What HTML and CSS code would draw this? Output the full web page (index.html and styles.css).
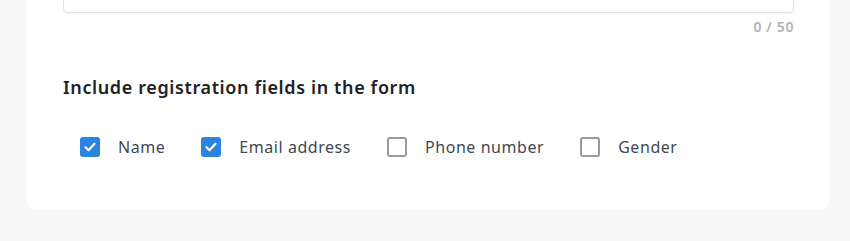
FILE: index.html
```html
<!DOCTYPE html>
<html lang="en">
<head>
<meta charset="utf-8">
<link rel="stylesheet" href="styles.css">
</head>
<body>
<div class="card">
  <div class="textarea"></div>
  <div class="counter">0 / 50</div>
  <h2 class="title">Include registration fields in the form</h2>
  <div class="options">
    <label class="option"><span class="box checked"><svg viewBox="0 0 20 20" width="20" height="20"><path d="M5.5 10.2l3 3 6-6.4" fill="none" stroke="#fff" stroke-width="2.2" stroke-linecap="round" stroke-linejoin="round"/></svg></span><span class="text">Name</span></label>
    <label class="option"><span class="box checked"><svg viewBox="0 0 20 20" width="20" height="20"><path d="M5.5 10.2l3 3 6-6.4" fill="none" stroke="#fff" stroke-width="2.2" stroke-linecap="round" stroke-linejoin="round"/></svg></span><span class="text">Email address</span></label>
    <label class="option"><span class="box"></span><span class="text">Phone number</span></label>
    <label class="option"><span class="box"></span><span class="text">Gender</span></label>
  </div>
</div>
</body>
</html>
```

FILE: styles.css
```css
html, body {
  margin: 0;
  padding: 0;
}
body {
  background: #f8f8f8;
  font-family: "Noto Sans", "Liberation Sans", sans-serif;
  width: 850px;
  height: 241px;
  overflow: hidden;
}
.card {
  margin: -70px 21px 0 27px;
  padding: 20px 35px 53px 36px;
  background: #ffffff;
  border-radius: 8px;
}
.textarea {
  height: 61px;
  border: 1px solid #dde2e6;
  border-radius: 4px;
  box-shadow: 0 1px 2px rgba(0,0,0,0.05);
}
.counter {
  margin-top: 5px;
  text-align: right;
  font-size: 14px;
  line-height: 18px;
  color: #b0b3b6;
  font-weight: 600;
  letter-spacing: 0.6px;
}
.title {
  margin: 39px 0 0 0;
  font-size: 18px;
  line-height: 24px;
  font-weight: 600;
  color: #1f2124;
  letter-spacing: 0.62px;
}
.options {
  margin-top: 38px;
  padding-left: 17px;
  display: flex;
  gap: 36px;
  align-items: center;
}
.option {
  display: flex;
  align-items: center;
  gap: 18px;
  height: 20px;
}
.box {
  width: 20px;
  height: 20px;
  box-sizing: border-box;
  border: 2px solid #9a9a9a;
  border-radius: 3px;
  background: #fff;
  display: block;
}
.box.checked {
  border: none;
  background: #2a84e0;
}
.box svg {
  display: block;
}
.text {
  font-size: 16px;
  line-height: 20px;
  color: #3f4850;
  letter-spacing: 0.55px;
}
```
